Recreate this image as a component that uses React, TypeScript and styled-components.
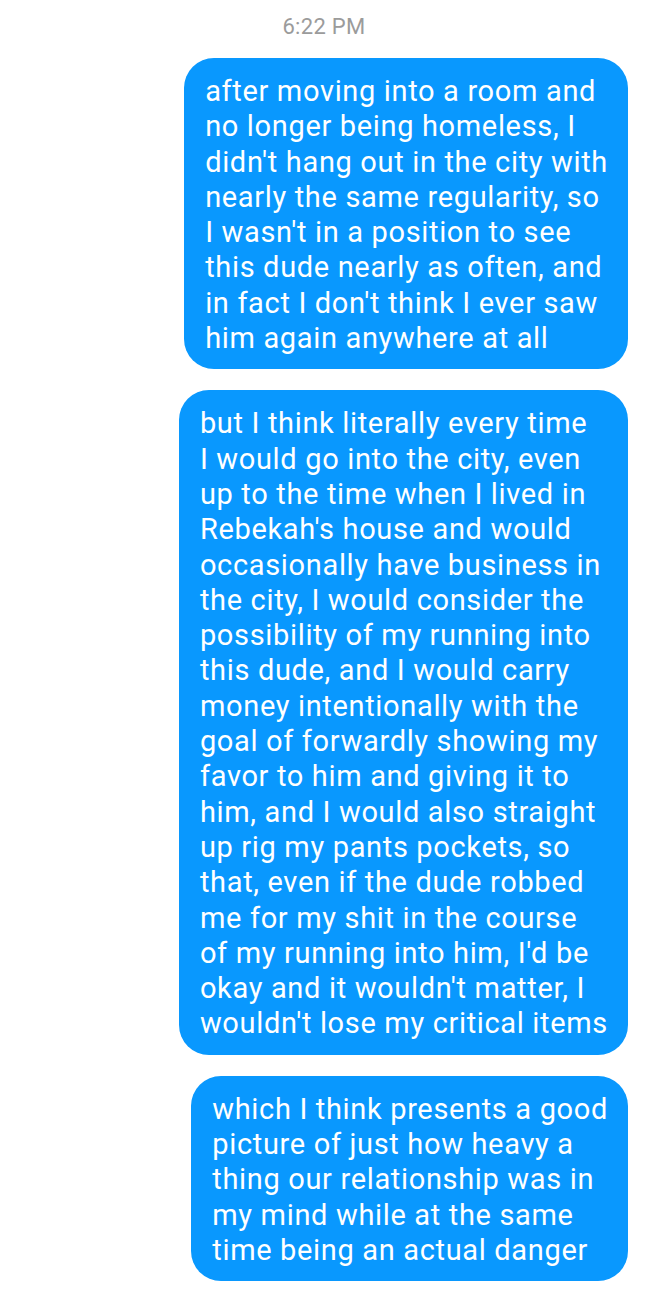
import React from "react";
import styled, { createGlobalStyle } from "styled-components";

const GlobalStyle = createGlobalStyle`
  html, body {
    margin: 0;
    padding: 0;
    background: #ffffff;
  }
  body {
    font-family: Roboto, "Noto Sans", "Liberation Sans", sans-serif;
  }
`;

const messages: string[][] = [
  [
    "after moving into a room and",
    "no longer being homeless, I",
    "didn't hang out in the city with",
    "nearly the same regularity, so",
    "I wasn't in a position to see",
    "this dude nearly as often, and",
    "in fact I don't think I ever saw",
    "him again anywhere at all",
  ],
  [
    "but I think literally every time",
    "I would go into the city, even",
    "up to the time when I lived in",
    "Rebekah's house and would",
    "occasionally have business in",
    "the city, I would consider the",
    "possibility of my running into",
    "this dude, and I would carry",
    "money intentionally with the",
    "goal of forwardly showing my",
    "favor to him and giving it to",
    "him, and I would also straight",
    "up rig my pants pockets, so",
    "that, even if the dude robbed",
    "me for my shit in the course",
    "of my running into him, I'd be",
    "okay and it wouldn't matter, I",
    "wouldn't lose my critical items",
  ],
  [
    "which I think presents a good",
    "picture of just how heavy a",
    "thing our relationship was in",
    "my mind while at the same",
    "time being an actual danger",
  ],
];

export default function App() {
  return (
    <>
      <GlobalStyle />
      <Thread>
        <Timestamp>6:22 PM</Timestamp>
        <MessageList>
          {messages.map((lines, i) => (
            <Bubble key={i}>
              {lines.map((line, j) => (
                <Line key={j}>{line}</Line>
              ))}
            </Bubble>
          ))}
        </MessageList>
      </Thread>
    </>
  );
}

const Thread = styled.div`
  width: 648px;
  min-height: 1300px;
  display: flex;
  flex-direction: column;
  background: #ffffff;
`;

const Timestamp = styled.div`
  text-align: center;
  color: #9b9b9b;
  font-size: 22px;
  line-height: 24px;
  padding-top: 15px;
  letter-spacing: 0.3px;
`;

const MessageList = styled.div`
  display: flex;
  flex-direction: column;
  align-items: flex-end;
  gap: 21px;
  padding: 19px 20px 20px 20px;
`;

const Bubble = styled.div`
  background: #0998fe;
  color: #ffffff;
  border-radius: 30px;
  padding: 16px 20px 13px 21px;
  font-size: 29px;
  line-height: 35.3px;
  letter-spacing: 0.66px;
`;

const Line = styled.div`
  white-space: nowrap;
`;
